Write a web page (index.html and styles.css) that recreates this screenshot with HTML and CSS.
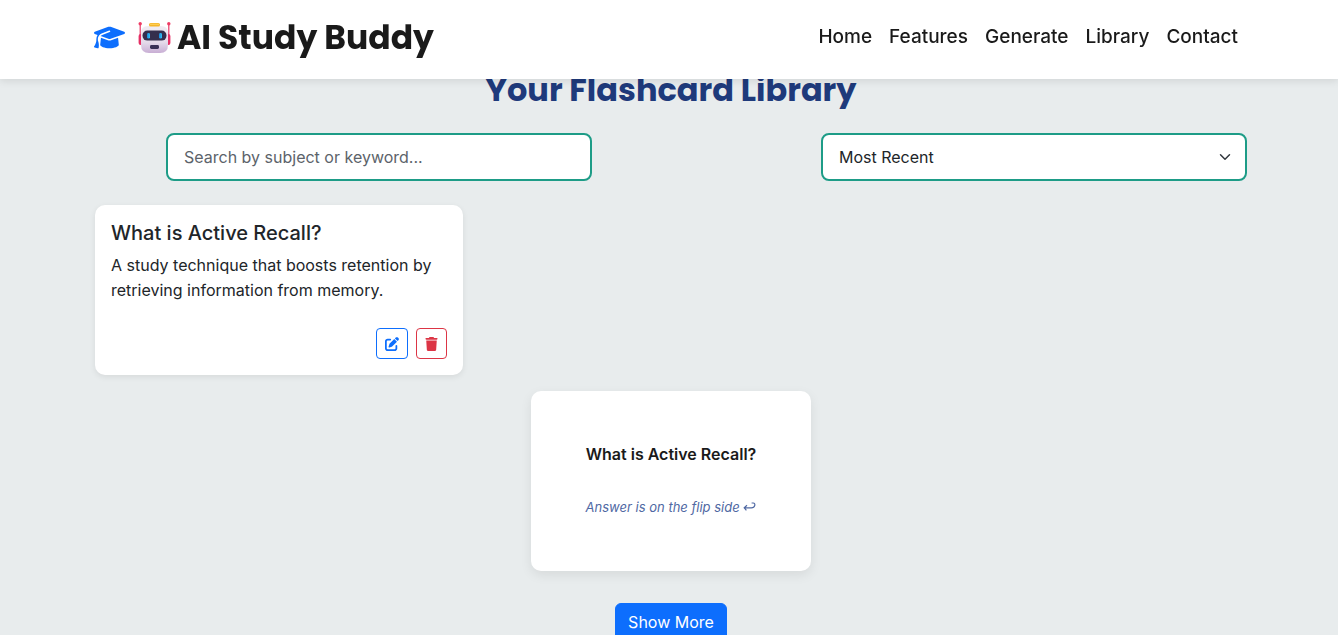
FILE: index.html
```html
<!DOCTYPE html>
<html lang="en">
<head>
<meta charset="utf-8">
<meta name="viewport" content="width=device-width, initial-scale=1">
<title>AI Study Buddy</title>
<link rel="stylesheet" href="styles.css">
</head>
<body>
<header class="site-header">
  <div class="container header-inner">
    <a class="brand" href="#">
      <svg class="brand-cap" viewBox="0 0 640 512" aria-hidden="true"><path fill="currentColor" d="M320 32c-8.1 0-16.1 1.4-23.7 4.1L15.8 137.4C6.3 140.9 0 149.9 0 160s6.3 19.1 15.8 22.6l57.9 20.9C57.3 229.3 48 259.8 48 291.9v28.1c0 28.4-10.8 57.7-22.3 80.8c-6.5 13-13.9 25.8-22.5 37.6C0 442.7-.9 448.3 .9 453.4s6 8.9 11.2 10.2l64 16c4.2 1.1 8.7 .3 12.4-2s6.3-6.1 7.1-10.4c8.6-42.8 4.3-81.2-2.1-108.7C90.3 344.3 86 329.8 80 316.5V291.9c0-30.2 10.2-58.7 27.9-81.5c12.9-15.5 29.6-28 49.2-35.7l157-61.7c8.2-3.2 17.5 .8 20.7 9s-.8 17.5-9 20.7l-157 61.7c-12.4 4.9-23.3 12.4-32.2 21.6l159.6 57.6c7.6 2.7 15.6 4.1 23.7 4.1s16.1-1.4 23.7-4.1L624.2 182.6c9.5-3.4 15.8-12.5 15.8-22.6s-6.3-19.1-15.8-22.6L343.7 36.1C336.1 33.4 328.1 32 320 32zM128 408c0 35.3 86 72 192 72s192-36.7 192-72L496.7 262.6 354.5 314c-11.1 4-22.8 6-34.5 6s-23.5-2-34.5-6L143.3 262.6 128 408z"/></svg>
      <svg class="brand-robot" viewBox="0 0 33 32" aria-hidden="true">
        <defs>
          <linearGradient id="face" x1="0" y1="0" x2="0" y2="1"><stop offset="0" stop-color="#f0edf3"/><stop offset=".6" stop-color="#e5dbea"/><stop offset="1" stop-color="#c8aed4"/></linearGradient>
          <linearGradient id="eye" x1="0" y1="0" x2="1" y2="0"><stop offset="0" stop-color="#1688d8"/><stop offset="1" stop-color="#35c3f7"/></linearGradient>
        </defs>
        <path d="M2.2 2v15M30.8 2v15" stroke="#e83b68" stroke-width="1.2"/>
        <circle cx="2.2" cy="1.8" r="1.7" fill="#ee3c64"/><circle cx="30.8" cy="1.8" r="1.7" fill="#ee3c64"/>
        <rect x=".6" y="12" width="4" height="11" rx="2" fill="#e52f64"/><rect x="28.4" y="12" width="4" height="11" rx="2" fill="#e52f64"/>
        <path d="M3 11q0-7 7-7h13q7 0 7 7v12q0 8-8 8H11q-8 0-8-8z" fill="url(#face)"/>
        <rect x="11" y="1" width="11" height="3.6" rx="1.6" fill="#f5b52a"/><path d="M12 2.3h9" stroke="#ffd45c"/>
        <rect x="4.5" y="8.6" width="24" height="10" rx="4.8" fill="#342f4d"/>
        <rect x="9" y="11" width="3" height="5.6" rx="1.4" fill="url(#eye)"/><rect x="21" y="11" width="3" height="5.6" rx="1.4" fill="url(#eye)"/>
        <rect x="12" y="23" width="9" height="4" rx="1.4" fill="#3a3157"/>
      </svg>
      <span class="brand-name">AI Study Buddy</span>
    </a>
    <nav class="nav">
      <a href="#">Home</a><a href="#">Features</a><a href="#">Generate</a><a href="#">Library</a><a href="#">Contact</a>
    </nav>
  </div>
</header>
<main class="container library">
  <h2 class="title">Your Flashcard Library</h2>
  <form class="filters">
    <input class="field" type="text" aria-label="Search flashcards" placeholder="Search by subject or keyword...">
    <select class="field select" aria-label="Sort flashcards"><option>Most Recent</option></select>
  </form>
  <div class="cards">
    <article class="card">
      <h5 class="card-title">What is Active Recall?</h5>
      <p class="card-text">A study technique that boosts retention by retrieving information from memory.</p>
      <div class="card-actions">
        <button class="icon-button edit" type="button" aria-label="Edit"><svg viewBox="0 0 512 512" width="14" height="14"><path fill="currentColor" d="M471.6 21.7c-21.9-21.9-57.3-21.9-79.2 0L362.3 51.7l97.9 97.9 30.1-30.1c21.9-21.9 21.9-57.3 0-79.2L471.6 21.7zm-299.2 220c-6.1 6.1-10.8 13.6-13.5 21.9l-29.6 88.8c-2.9 8.6-.6 18.1 5.8 24.6s15.9 8.7 24.6 5.8l88.8-29.6c8.2-2.7 15.7-7.4 21.9-13.5L437.7 172.3 339.7 74.3 172.4 241.7zM96 64C43 64 0 107 0 160V416c0 53 43 96 96 96H352c53 0 96-43 96-96V320c0-17.7-14.3-32-32-32s-32 14.3-32 32v96c0 17.7-14.3 32-32 32H96c-17.7 0-32-14.3-32-32V160c0-17.7 14.3-32 32-32h96c17.7 0 32-14.3 32-32s-14.3-32-32-32H96z"/></svg></button>
        <button class="icon-button delete" type="button" aria-label="Delete"><svg viewBox="0 0 448 512" width="13" height="14"><path fill="currentColor" d="M135.2 17.7L128 32H32C14.3 32 0 46.3 0 64S14.3 96 32 96H416c17.7 0 32-14.3 32-32s-14.3-32-32-32H320l-7.2-14.3C307.4 6.8 296.3 0 284.2 0H163.8c-12.1 0-23.2 6.8-28.6 17.7zM416 128H32L53.2 467c1.6 25.3 22.6 45 47.9 45H346.9c25.3 0 46.3-19.7 47.9-45L416 128z"/></svg></button>
      </div>
    </article>
  </div>
  <article class="flip-card">
    <p class="question">What is Active Recall?</p>
    <p class="hint">Answer is on the flip side <svg viewBox="0 0 13 10" width="13" height="10" aria-hidden="true"><path d="M8.6 1h1.7c2.4 0 2.2 4.8-2 4.8H1.2M4 3.2 1.2 5.8 3.4 8.4" fill="none" stroke="currentColor" stroke-width="1.2"/></svg></p>
  </article>
  <button class="more" type="button">Show More</button>
</main>
</body>
</html>
```
FILE: styles.css
```css
* { box-sizing: border-box; }
html { scrollbar-width: none; }
body {
  margin: 0;
  padding-left: 4px;
  background: #e8eced;
  color: #212529;
  font: 16px/25px Inter, "Liberation Sans", sans-serif;
}
h2, h5, p { margin: 0; }
button, input, select { font: inherit; }
a { color: inherit; text-decoration: none; }
.container {
  width: calc(100% - 32px);
  max-width: 1152px;
  margin: 0 auto;
}
.site-header {
  position: fixed;
  inset: 0 0 auto;
  z-index: 10;
  padding: 13px 0 17px 2px;
  background: #fff;
  box-shadow: 0 2px 8px rgba(0, 0, 0, .1);
  color: #1a1a1a;
}
.header-inner {
  display: flex;
  align-items: center;
  justify-content: space-between;
}
.brand { display: flex; align-items: center; }
.brand-cap { width: 31px; height: 25px; margin-right: 13px; color: #0d6efd; }
.brand-robot { width: 33px; height: 32px; margin-right: 6px; }
.brand-name { font: 700 33px/49px Poppins, Inter, sans-serif; }
.nav { display: flex; gap: 17px; padding-right: 8px; font-size: 19px; font-weight: 500; line-height: 27px; padding-bottom: 2px; }
.library {
  display: flex;
  flex-direction: column;
  padding: 70px 0 32px;
}
.title {
  align-self: center;
  color: #1e3a7b;
  font: 700 32px/39px Poppins, Inter, sans-serif;
}
.filters {
  display: flex;
  justify-content: space-between;
  margin: 24px 0;
  padding-left: 71px;
}
.field {
  width: 426px;
  height: 48px;
  padding: 0 16px;
  border: 2px solid #1d9c87;
  border-radius: 8px;
  background: #fff;
  color: #212529;
}
.field::placeholder { color: #5c636a; opacity: 1; }
.select {
  appearance: none;
  background: #fff url("data:image/svg+xml,%3Csvg xmlns='http://www.w3.org/2000/svg' viewBox='0 0 16 16'%3E%3Cpath fill='none' stroke='%23343a40' stroke-linecap='round' stroke-linejoin='round' stroke-width='2' d='m2 5 6 6 6-6'/%3E%3C/svg%3E") no-repeat right 12px center / 16px 12px;
}
.cards {
  display: grid;
  grid-template-columns: repeat(auto-fill, minmax(320px, 1fr));
  gap: 24px;
}
.card {
  padding: 16px;
  border-radius: 10px;
  background: #fff;
  box-shadow: 0 2px 6px rgba(0, 0, 0, .08);
}
.card-title { margin-bottom: 8px; font-size: 20px; font-weight: 500; line-height: 24px; }
.card-actions { display: flex; justify-content: flex-end; gap: 8px; margin-top: 25px; }
.icon-button {
  display: grid;
  place-items: center;
  height: 31px;
  padding: 0 8px;
  border: 1px solid currentColor;
  border-radius: 4px;
  background: transparent;
}
.edit { color: #0d6efd; }
.delete { color: #dc3545; }
.flip-card {
  display: flex;
  flex-direction: column;
  align-items: center;
  justify-content: center;
  gap: 28px;
  align-self: center;
  width: 280px;
  min-height: 180px;
  margin: 16px 0 32px;
  border-radius: 10px;
  background: #fff;
  box-shadow: 0 4px 12px rgba(0, 0, 0, .08);
}
.question { color: #1a1a1a; font-weight: 600; }
.hint { color: #5069a3; font-size: 13px; font-style: italic; }
.more {
  align-self: center;
  padding: 6px 12px;
  border: 1px solid #0d6efd;
  border-radius: 6px;
  background: #0d6efd;
  color: #fff;
}
```
